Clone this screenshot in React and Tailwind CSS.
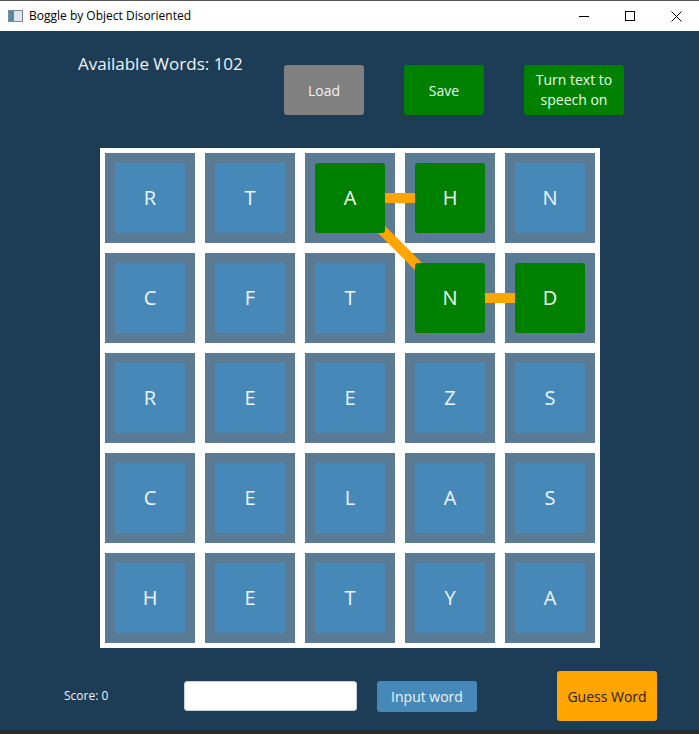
import React from 'react';

const board = [
  ['R', 'T', 'A', 'H', 'N'],
  ['C', 'F', 'T', 'N', 'D'],
  ['R', 'E', 'E', 'Z', 'S'],
  ['C', 'E', 'L', 'A', 'S'],
  ['H', 'E', 'T', 'Y', 'A'],
];

// selected path: A -> H, A -> N -> D
const selected = ['0-2', '0-3', '1-3', '1-4'];

function TitleBar() {
  return (
    <div className="h-[31px] bg-white border-t border-[#555] flex items-center text-[12px] text-black shrink-0">
      <div className="ml-[8px] w-[15px] h-[12px] border border-[#7a8a96] bg-[#dfe6ea] flex">
        <div className="w-[5px] h-full bg-[#5a8aa6]" />
      </div>
      <span className="ml-[6px]">Boggle by Object Disoriented</span>
      <div className="ml-auto flex items-center h-full">
        <div className="w-[46px] h-full flex items-center justify-center">
          <div className="w-[10px] h-px bg-black" />
        </div>
        <div className="w-[46px] h-full flex items-center justify-center">
          <div className="w-[10px] h-[10px] border border-black" />
        </div>
        <div className="w-[46px] h-full flex items-center justify-center">
          <svg width="11" height="11" viewBox="0 0 11 11">
            <path d="M0.5 0.5L10.5 10.5M10.5 0.5L0.5 10.5" stroke="black" strokeWidth="1" />
          </svg>
        </div>
      </div>
    </div>
  );
}

export default function App() {
  return (
    <div
      className="w-[699px] h-[734px] flex flex-col overflow-hidden"
      style={{ fontFamily: '"Open Sans", "Noto Sans", sans-serif' }}
    >
      <TitleBar />

      <div className="flex-1 bg-[#1d3d56] flex flex-col">
        {/* Header */}
        <div className="flex items-start">
          <div className="ml-[78px] mt-[21px] w-[206px] text-[17px] leading-[24px] text-[#f0f4f8]">
            Available Words: 102
          </div>
          <div className="flex gap-[40px] mt-[34px]">
            <button className="w-[80px] h-[50px] rounded-[3px] bg-[#808080] text-[#f2f2f2] text-[14px]">
              Load
            </button>
            <button className="w-[80px] h-[50px] rounded-[3px] bg-[#008000] text-[#e8ffe8] text-[14px]">
              Save
            </button>
            <button className="w-[100px] h-[50px] rounded-[3px] bg-[#008000] text-[#e8ffe8] text-[14px] leading-[20px]">
              Turn text to
              <br />
              speech on
            </button>
          </div>
        </div>

        {/* Board */}
        <div className="ml-[100px] mt-[33px] w-[500px] h-[500px] bg-white p-[5px] relative">
          <div className="grid grid-cols-5 gap-[10px]">
            {board.map((row, r) =>
              row.map((ch, c) => {
                const on = selected.includes(`${r}-${c}`);
                return (
                  <div key={`${r}-${c}`} className="w-[90px] h-[90px] bg-[#5b7a93] p-[10px]">
                    <div
                      className={
                        on
                          ? 'relative z-10 w-[70px] h-[70px] rounded-[3px] bg-[#008000] flex items-center justify-center text-[20px] text-[#f0fff0]'
                          : 'relative z-10 w-[70px] h-[70px] rounded-[2px] bg-[#4689b9] flex items-center justify-center text-[20px] text-[#eef6ff]'
                      }
                    >
                      {ch}
                    </div>
                  </div>
                );
              })
            )}
          </div>
          {/* path between selected letters */}
          <svg className="absolute left-0 top-0 z-[5] pointer-events-none" width="500" height="500">
            <line x1="250" y1="50" x2="350" y2="50" stroke="#ffa500" strokeWidth="10" />
            <line x1="250" y1="50" x2="350" y2="150" stroke="#ffa500" strokeWidth="10" />
            <line x1="350" y1="150" x2="450" y2="150" stroke="#ffa500" strokeWidth="10" />
          </svg>
        </div>

        {/* Bottom controls */}
        <div className="mt-[23px] h-[50px] flex items-center">
          <div className="ml-[64px] w-[120px] text-[12px] text-[#f0f4f8]">Score: 0</div>
          <input
            type="text"
            className="w-[173px] h-[30px] rounded-[3px] bg-white border border-[#c8d0d8] outline-none px-2 text-[13px]"
          />
          <button className="ml-[20px] w-[100px] h-[31px] rounded-[3px] bg-[#4689b9] text-[#f0f4f8] text-[14px]">
            Input word
          </button>
          <button className="ml-[80px] w-[100px] h-[50px] rounded-[3px] bg-[#ffa500] text-[#222] text-[14px]">
            Guess Word
          </button>
        </div>
        <div className="mt-auto h-[4px] bg-[#2b2b2b]" />
      </div>
    </div>
  );
}
